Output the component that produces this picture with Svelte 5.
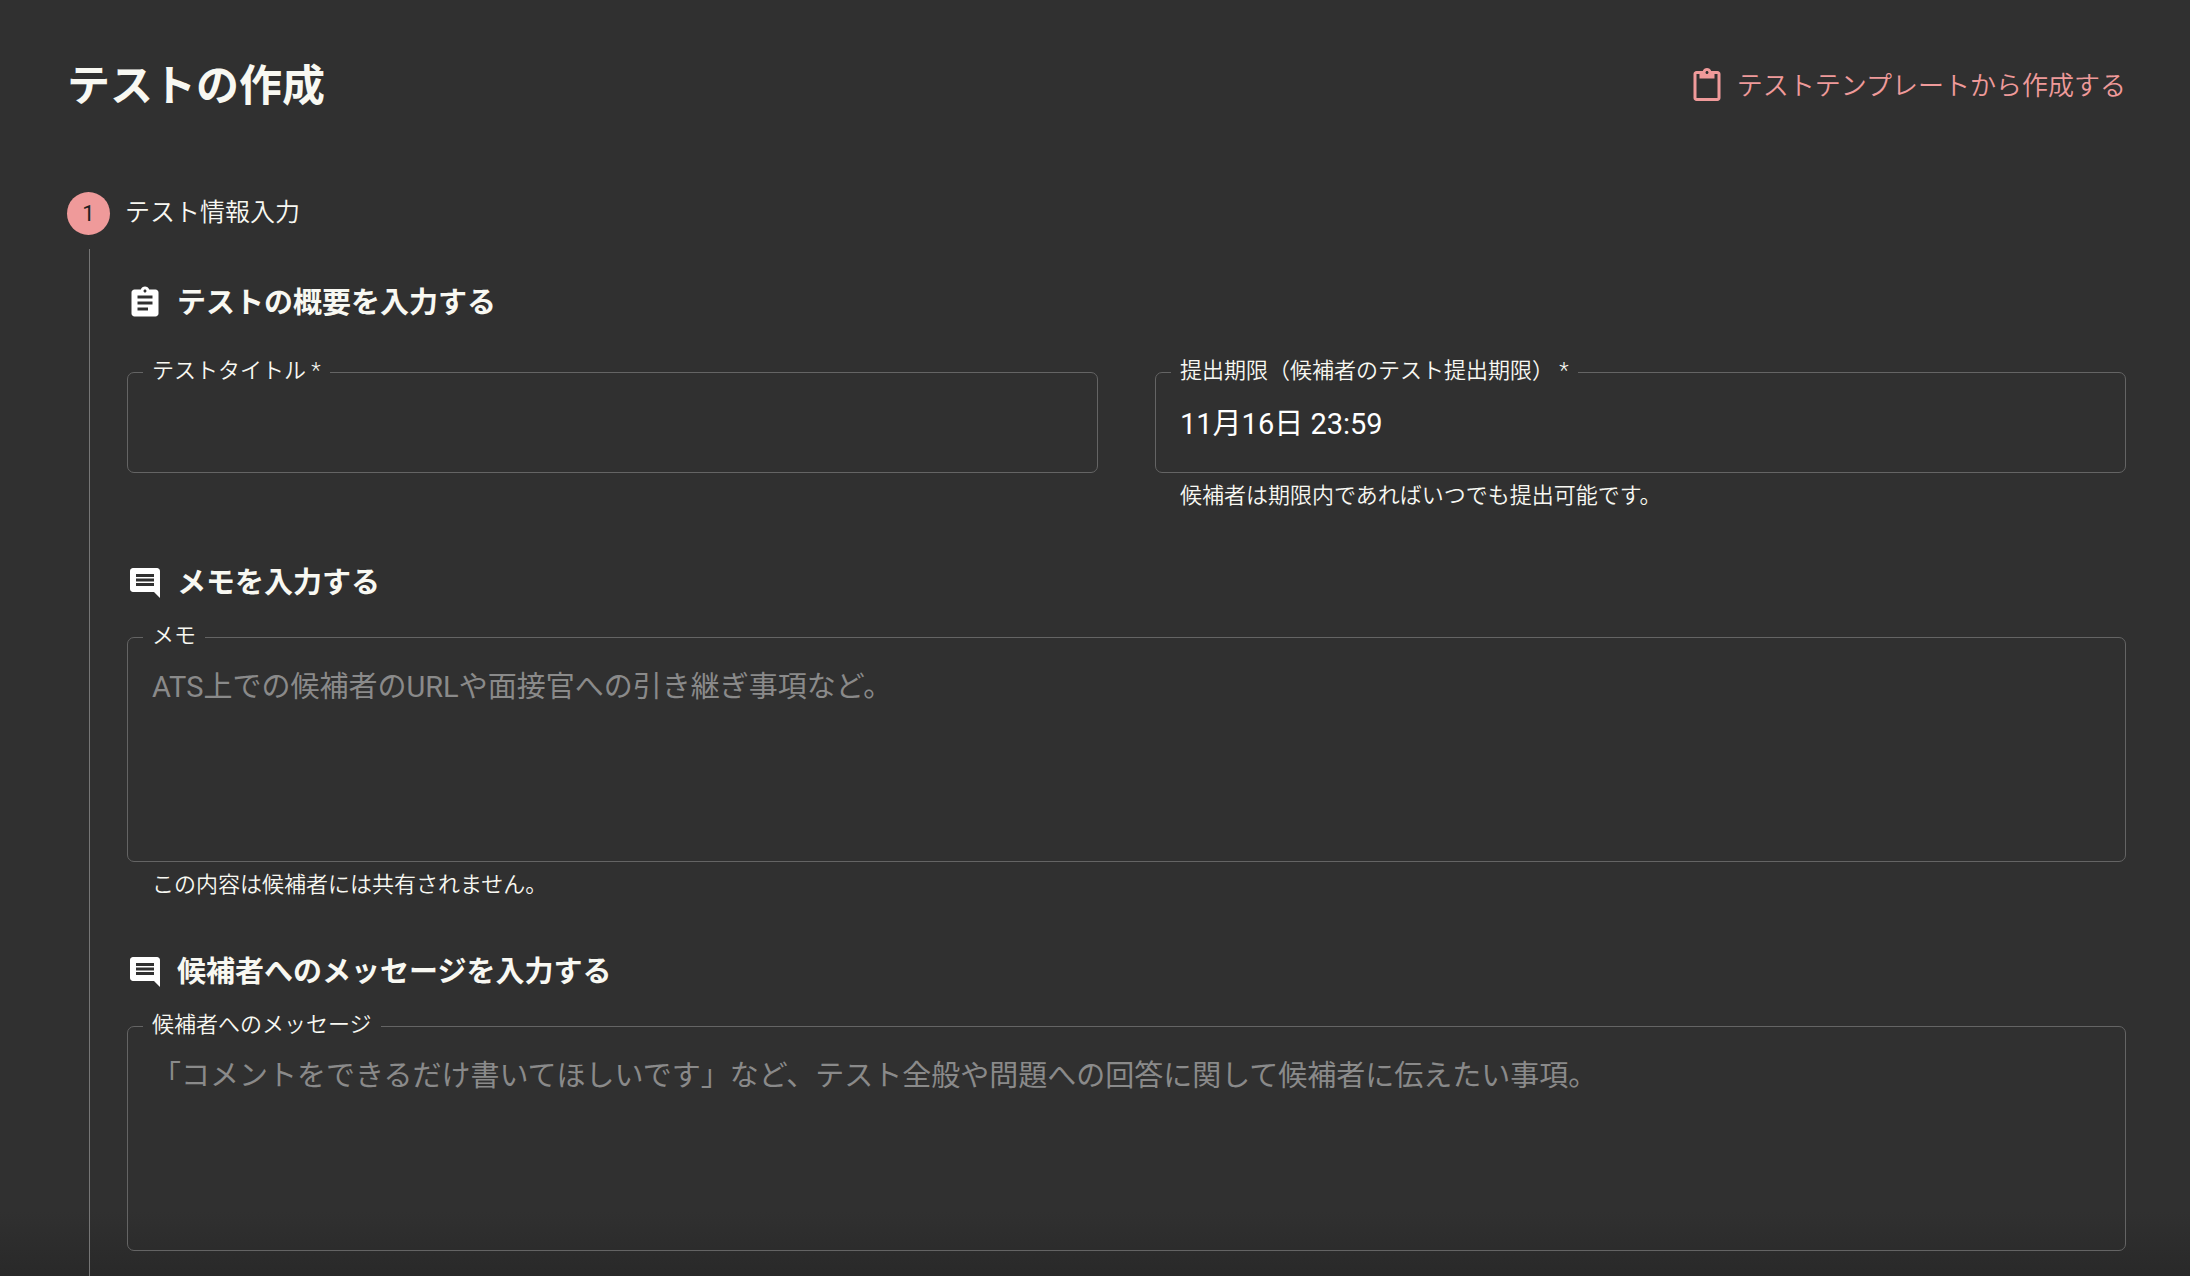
<script lang="ts">
    let title = '';
    let deadline = '11月16日 23:59';
    let memo = '';
    let message = '';
</script>

<main class="page">
    <header class="header">
        <h1>テストの作成</h1>
        <a class="template" href="#templates">
            <svg class="icon" viewBox="0 0 24 24" aria-hidden="true">
                <path d="M19 2h-4.18C14.4.84 13.3 0 12 0c-1.3 0-2.4.84-2.82 2H5c-1.1 0-2 .9-2 2v16c0 1.1.9 2 2 2h14c1.1 0 2-.9 2-2V4c0-1.1-.9-2-2-2zm-7 0c.55 0 1 .45 1 1s-.45 1-1 1-1-.45-1-1 .45-1 1-1zm7 18H5V4h2v3h10V4h2v16z" />
            </svg>
            テストテンプレートから作成する
        </a>
    </header>

    <div class="step">
        <span class="number">1</span>
        <span class="step-label">テスト情報入力</span>
    </div>

    <form class="content">
        <section>
            <h2>
                <svg class="icon" viewBox="0 0 24 24" aria-hidden="true">
                    <path d="M19 3h-4.18C14.4 1.84 13.3 1 12 1c-1.3 0-2.4.84-2.82 2H5c-1.1 0-2 .9-2 2v14c0 1.1.9 2 2 2h14c1.1 0 2-.9 2-2V5c0-1.1-.9-2-2-2zm-7 0c.55 0 1 .45 1 1s-.45 1-1 1-1-.45-1-1 .45-1 1-1zm2 14H7v-2h7v2zm3-4H7v-2h10v2zm0-4H7V7h10v2z" />
                </svg>
                テストの概要を入力する
            </h2>
            <div class="columns">
                <div>
                    <fieldset>
                        <legend><label for="title">テストタイトル *</label></legend>
                        <input id="title" type="text" bind:value={title} />
                    </fieldset>
                </div>
                <div>
                    <fieldset>
                        <legend><label for="deadline">提出期限（候補者のテスト提出期限） *</label></legend>
                        <input id="deadline" type="text" bind:value={deadline} />
                    </fieldset>
                    <p class="helper">候補者は期限内であればいつでも提出可能です。</p>
                </div>
            </div>
        </section>

        <section>
            <h2>
                <svg class="icon" viewBox="0 0 24 24" aria-hidden="true">
                    <path d="M21.99 4c0-1.1-.89-2-1.99-2H4c-1.1 0-2 .9-2 2v12c0 1.1.9 2 2 2h14l4 4-.01-18zM18 14H6v-2h12v2zm0-3H6V9h12v2zm0-3H6V6h12v2z" />
                </svg>
                メモを入力する
            </h2>
            <fieldset>
                <legend><label for="memo">メモ</label></legend>
                <textarea id="memo" bind:value={memo} placeholder="ATS上での候補者のURLや面接官への引き継ぎ事項など。"></textarea>
            </fieldset>
            <p class="helper">この内容は候補者には共有されません。</p>
        </section>

        <section>
            <h2>
                <svg class="icon" viewBox="0 0 24 24" aria-hidden="true">
                    <path d="M21.99 4c0-1.1-.89-2-1.99-2H4c-1.1 0-2 .9-2 2v12c0 1.1.9 2 2 2h14l4 4-.01-18zM18 14H6v-2h12v2zm0-3H6V9h12v2zm0-3H6V6h12v2z" />
                </svg>
                候補者へのメッセージを入力する
            </h2>
            <fieldset>
                <legend><label for="message">候補者へのメッセージ</label></legend>
                <textarea id="message" bind:value={message} placeholder="「コメントをできるだけ書いてほしいです」など、テスト全般や問題への回答に関して候補者に伝えたい事項。"></textarea>
            </fieldset>
        </section>
    </form>
</main>

<style>
    :global(body) {
        background: #303030;
    }

    .page {
        box-sizing: border-box;
        min-height: 100vh;
        display: flex;
        flex-direction: column;
        padding: 54px 64px 0 67px;
        font-family: Roboto, 'Noto Sans CJK JP', sans-serif;
        font-weight: 350;
        color: #f8f8f2;
        background: linear-gradient(to top, #292929, #303030 64px);
    }

    .header {
        display: flex;
        justify-content: space-between;
        align-items: center;
        margin-bottom: 74px;
    }

    h1 {
        margin: 0;
        font-size: 43px;
        font-weight: 600;
        line-height: 64px;
    }

    .icon {
        width: 36px;
        height: 36px;
        flex: none;
        fill: currentColor;
    }

    .template {
        display: flex;
        align-items: center;
        gap: 12px;
        font-size: 26px;
        line-height: 36px;
        color: #ef9a9a;
        text-decoration: none;
    }

    .step {
        display: flex;
        align-items: center;
        gap: 15px;
        margin-bottom: 14px;
    }

    .number {
        width: 43px;
        height: 43px;
        border-radius: 50%;
        background: #ef9a9a;
        color: #212121;
        font-size: 22px;
        font-weight: 400;
        line-height: 43px;
        text-align: center;
    }

    .step-label {
        padding-bottom: 2px;
        font-size: 25px;
        line-height: 36px;
    }

    .content {
        flex: 1;
        margin-left: 22px;
        padding: 36px 0 24px 37px;
        border-left: 1px solid #757575;
    }

    section + section {
        margin-top: 51px;
    }

    h2 {
        display: flex;
        align-items: center;
        gap: 14px;
        margin: 0 0 24px;
        font-size: 29px;
        font-weight: 600;
        line-height: 36px;
    }

    h2 .icon {
        color: #fff;
    }

    .columns {
        display: grid;
        grid-template-columns: 1fr 1fr;
        gap: 57px;
        padding-top: 15px;
    }

    fieldset {
        margin: 0;
        padding: 0 15px;
        border: 1px solid #646464;
        border-radius: 7px;
    }

    legend {
        padding: 0 9px 2px;
        font-size: 22px;
        line-height: 22px;
    }

    label {
        display: block;
    }

    input,
    textarea {
        display: block;
        box-sizing: border-box;
        width: 100%;
        border: 0;
        outline: 0;
        resize: none;
        background: none;
        color: #fff;
        font-family: inherit;
        font-size: 29px;
        font-weight: 400;
        line-height: 34px;
    }

    input {
        height: 88px;
        padding: 0 9px 14px;
    }

    textarea {
        height: 212px;
        padding: 21px 9px;
    }

    textarea::placeholder {
        color: #8a8a8a;
    }

    .helper {
        margin: 5px 25px 0;
        font-size: 22px;
        line-height: 36px;
    }
</style>
